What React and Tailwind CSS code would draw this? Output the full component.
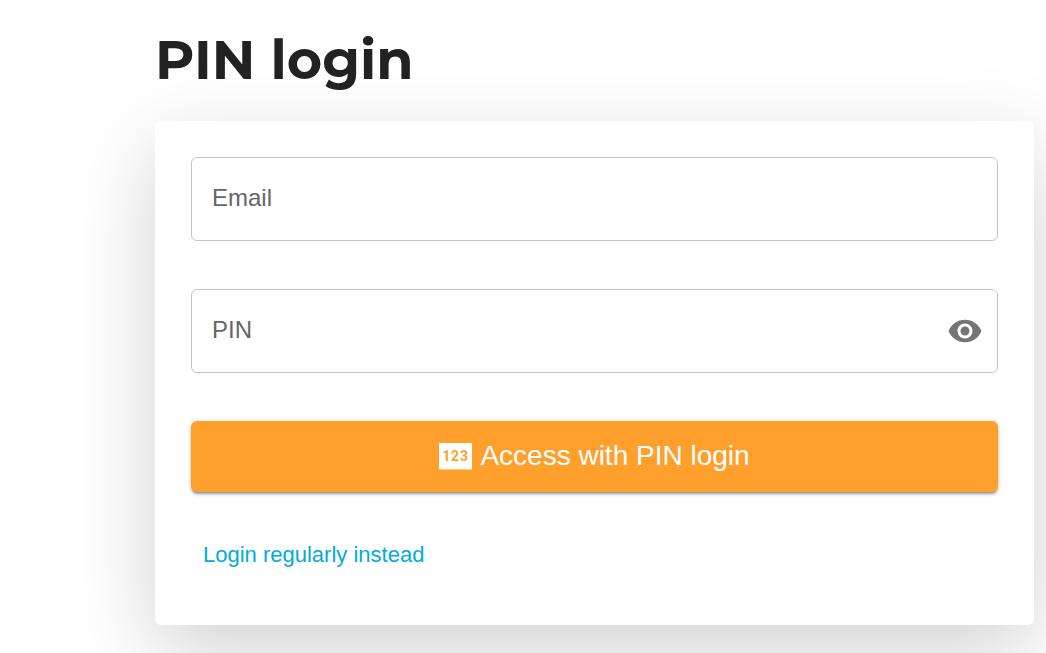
import { useState } from 'react'
import { MdVisibility, MdVisibilityOff } from 'react-icons/md'

const PinIcon = () => (
  <svg viewBox="0 0 33 27" className="h-[27px] w-[33px] shrink-0" aria-hidden="true">
    <rect width="33" height="26.4" fill="#fff" />
    <g className="font-['Roboto',sans-serif] text-[14px] font-bold" fill="#ffa02d" textAnchor="middle">
      <text x="7.5" y="18.4">1</text>
      <text x="16" y="18.4">2</text>
      <text x="25" y="18.4">3</text>
    </g>
  </svg>
)

const Field = ({ id, label, type = 'text', children }) => (
  <div className="flex h-[84px] items-center rounded-md border border-[#c4c4c4] pr-3.5 pl-5 focus-within:border-[#ffa02d]">
    <label htmlFor={id} className="pb-0.5 text-2xl text-[#666]">{label}</label>
    <input
      id={id}
      type={type}
      className="h-full min-w-0 flex-1 bg-transparent px-4 text-2xl text-[#222] outline-none"
    />
    {children}
  </div>
)

export default function App() {
  const [showPin, setShowPin] = useState(false)

  return (
    <main className="min-h-screen bg-white pt-6 pr-3 pb-7 pl-[155px] font-['Liberation_Sans',Arial,sans-serif]">
      <h1 className="mb-6 font-['Montserrat','Inter',sans-serif] text-[54px] leading-[73px] font-bold text-[#222]">
        PIN login
      </h1>

      <form
        onSubmit={(e) => e.preventDefault()}
        className="flex flex-col gap-12 rounded-md bg-white p-9 shadow-[0_27px_86px_rgba(0,0,0,0.18)]"
      >
        <Field id="email" label="Email" type="email" />

        <Field id="pin" label="PIN" type={showPin ? 'text' : 'password'}>
          <button
            type="button"
            aria-label="Show PIN"
            aria-pressed={showPin}
            onClick={() => setShowPin(!showPin)}
            className="shrink-0 text-[#757575]"
          >
            {showPin ? <MdVisibilityOff className="size-9" /> : <MdVisibility className="size-9" />}
          </button>
        </Field>

        <div className="flex flex-col items-start gap-7">
          <button
            type="submit"
            className="flex h-[71px] w-full items-center justify-center gap-2 rounded-md bg-[#ffa02d] text-[28px] text-white shadow-[0_3px_3px_-2px_rgba(0,0,0,0.3),0_2px_3px_rgba(0,0,0,0.2),0_1px_6px_rgba(0,0,0,0.12)]"
          >
            <PinIcon />
            <span className="pb-0.5">Access with PIN login</span>
          </button>

          <a href="#login" className="px-3 py-[18px] text-[22px] leading-[33px] text-[#03a9e0]">
            Login regularly instead
          </a>
        </div>
      </form>
    </main>
  )
}
